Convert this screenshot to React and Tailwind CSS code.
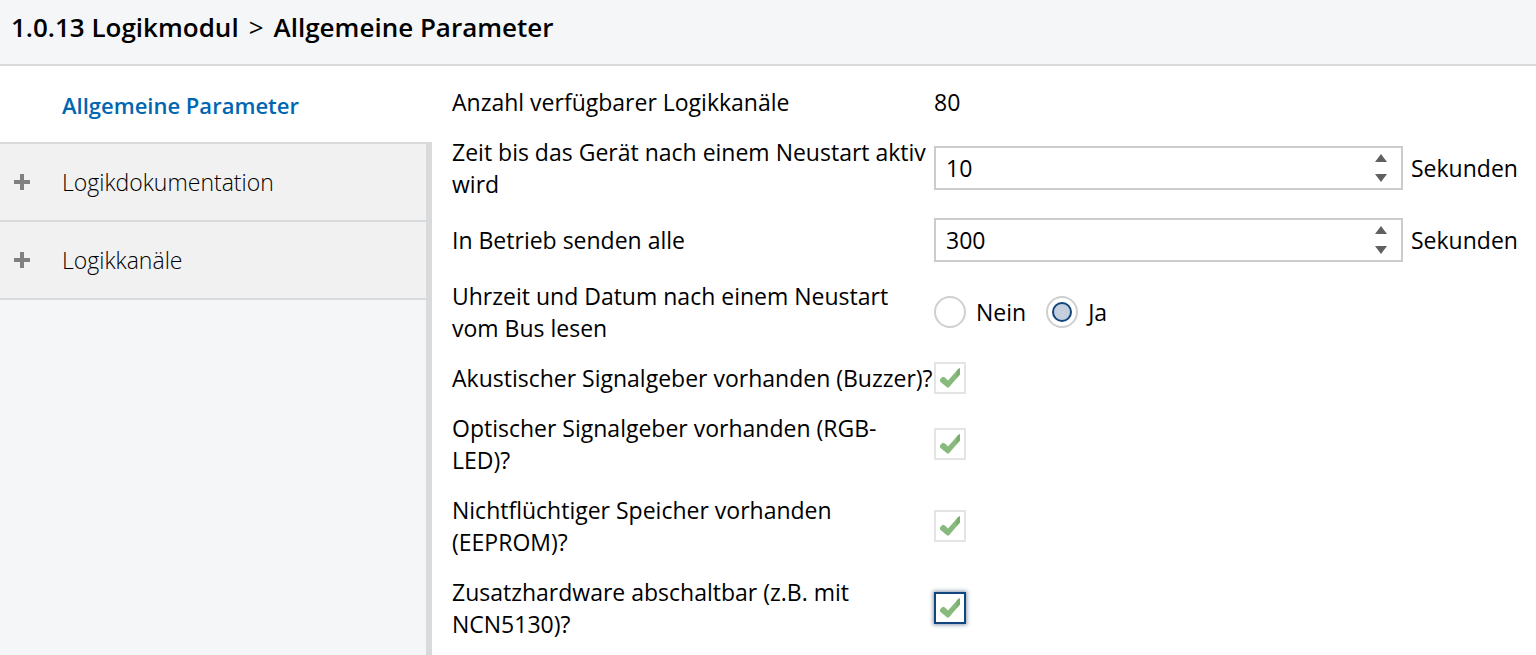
import { useState } from "react";

const sections = ["Logikdokumentation", "Logikkanäle"];

function PlusIcon() {
  return (
    <svg width="18" height="18" viewBox="0 0 18 18" aria-hidden="true">
      <path d="M7 1h4v6h6v4h-6v6H7v-6H1V7h6z" fill="#808080" />
    </svg>
  );
}

function Row({ label, htmlFor, children }) {
  return (
    <div className="flex items-center py-[9px]">
      {htmlFor ? (
        <label htmlFor={htmlFor} className="w-[482px] shrink-0">
          {label}
        </label>
      ) : (
        <div className="w-[482px] shrink-0">{label}</div>
      )}
      {children}
    </div>
  );
}

function SecondsField({ id, label, initial }) {
  const [value, setValue] = useState(initial);
  return (
    <Row label={label} htmlFor={id}>
      <div className="flex h-11 min-w-0 flex-1 border-2 border-[#cccccc] bg-white">
        <input
          id={id}
          type="text"
          inputMode="numeric"
          value={value}
          onChange={(e) => setValue(Number(e.target.value) || 0)}
          className="min-w-0 flex-1 px-[10px] outline-none"
        />
        <div className="flex w-10 flex-col items-center justify-center gap-2">
          <button type="button" aria-label="Erhöhen" onClick={() => setValue(value + 1)}>
            <svg className="block" width="12" height="8" viewBox="0 0 12 8" aria-hidden="true">
              <path d="M6 0l6 8H0z" fill="#606060" />
            </svg>
          </button>
          <button type="button" aria-label="Verringern" onClick={() => setValue(value - 1)}>
            <svg className="mt-1 block" width="12" height="8" viewBox="0 0 12 8" aria-hidden="true">
              <path d="M0 0h12L6 8z" fill="#606060" />
            </svg>
          </button>
        </div>
      </div>
      <span className="w-[133px] shrink-0 pl-2">Sekunden</span>
    </Row>
  );
}

function Radio({ label, checked, onChange }) {
  return (
    <label className="flex items-center gap-[10px]">
      <span className="relative flex h-8 w-8">
        <input
          type="radio"
          name="uhrzeit"
          checked={checked}
          onChange={onChange}
          className="h-8 w-8 appearance-none rounded-full border-2 border-[#cfcfcf] bg-white"
        />
        {checked && (
          <span className="pointer-events-none absolute inset-[6px] rounded-full border-2 border-[#11457e] bg-[#c3cfdd]" />
        )}
      </span>
      {label}
    </label>
  );
}

function CheckRow({ id, label, focused }) {
  const [checked, setChecked] = useState(true);
  return (
    <Row label={label} htmlFor={id}>
      <span className="relative flex h-8 w-8">
        <input
          id={id}
          type="checkbox"
          checked={checked}
          onChange={() => setChecked(!checked)}
          className={
            focused
              ? "h-8 w-8 appearance-none border-2 border-[#11457e] bg-white shadow-[0_0_4px_1px_#8f9ab0]"
              : "h-8 w-8 appearance-none border-2 border-[#e4e4e4] bg-white"
          }
        />
        {checked && (
          <svg
            className="pointer-events-none absolute inset-0"
            width="32"
            height="32"
            viewBox="0 0 32 32"
            aria-hidden="true"
          >
            <path d="M6 17.5L8.5 14.8L11 15.4L14 18.4L24 7.2L26 6V12.4L14.8 25.6H13.2L6 19.6z" fill="#88ba7d" />
            <path d="M22.5 9L24 7.2L26 6V12.4L22.5 16.5z" fill="#6f9f66" fillOpacity="0.5" />
          </svg>
        )}
      </span>
    </Row>
  );
}

export default function App() {
  const [readTime, setReadTime] = useState(true);
  return (
    <div className="flex min-h-screen flex-col bg-white font-['Open_Sans','Noto_Sans',sans-serif] text-[23px] leading-8 text-black">
      <header className="border-b-2 border-[#d9dadb] bg-[#f4f6f8] px-[11px] pt-[11px] pb-[21px]">
        <h1 className="flex gap-[10px] text-[26px] leading-8 font-semibold">
          <span>1.0.13 Logikmodul</span>
          <span className="font-normal">&gt;</span>
          <span>Allgemeine Parameter</span>
        </h1>
      </header>
      <div className="flex flex-1">
        <nav className="flex w-[432px] shrink-0 flex-col">
          <a href="#allgemein" className="flex h-[76px] items-center pt-0.5 pl-[62px] text-[22px] font-semibold text-[#0066b1]">
            Allgemeine Parameter
          </a>
          <div className="flex-1 border-t-2 border-r-6 border-[#d9dadc] bg-[#f4f6f8]">
            {sections.map((name) => (
              <button
                key={name}
                type="button"
                className="flex h-[78px] w-full items-center border-b-2 border-[#d9dadb] bg-[#f1f1f1] pl-[13px] text-left font-light"
              >
                <span className="w-[49px]">
                  <PlusIcon />
                </span>
                {name}
              </button>
            ))}
          </div>
        </nav>
        <main className="min-w-0 flex-1 pt-[11px] pl-5">
          <Row label="Anzahl verfügbarer Logikkanäle">80</Row>
          <SecondsField id="startup" label="Zeit bis das Gerät nach einem Neustart aktiv wird" initial={10} />
          <SecondsField id="heartbeat" label="In Betrieb senden alle" initial={300} />
          <Row label="Uhrzeit und Datum nach einem Neustart vom Bus lesen">
            <div className="flex gap-5" role="radiogroup" aria-label="Uhrzeit und Datum nach einem Neustart vom Bus lesen">
              <Radio label="Nein" checked={!readTime} onChange={() => setReadTime(false)} />
              <Radio label="Ja" checked={readTime} onChange={() => setReadTime(true)} />
            </div>
          </Row>
          <CheckRow id="buzzer" label="Akustischer Signalgeber vorhanden (Buzzer)?" />
          <CheckRow id="led" label="Optischer Signalgeber vorhanden (RGB-LED)?" />
          <CheckRow id="eeprom" label="Nichtflüchtiger Speicher vorhanden (EEPROM)?" />
          <CheckRow id="hardware" label="Zusatzhardware abschaltbar (z.B. mit NCN5130)?" focused />
        </main>
      </div>
    </div>
  );
}
